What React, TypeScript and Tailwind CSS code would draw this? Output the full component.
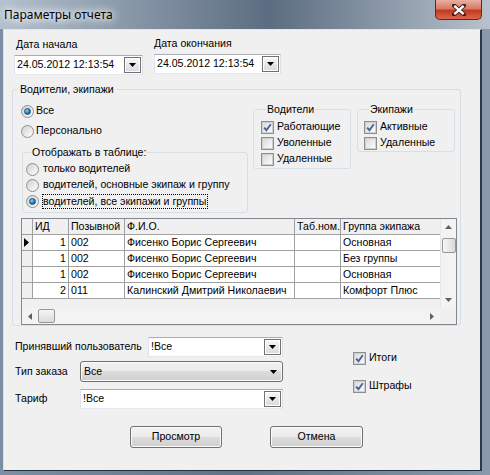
import React from "react";

const rows = [
  { id: 1, call: "002", name: "Фисенко Борис Сергеевич", tab: "", group: "Основная", current: true },
  { id: 1, call: "002", name: "Фисенко Борис Сергеевич", tab: "", group: "Без группы" },
  { id: 1, call: "002", name: "Фисенко Борис Сергеевич", tab: "", group: "Основная" },
  { id: 2, call: "011", name: "Калинский Дмитрий Николаевич", tab: "", group: "Комфорт Плюс" },
];

function Radio({ checked }: { checked?: boolean }) {
  return (
    <span className="flex h-[13px] w-[13px] shrink-0 items-center justify-center rounded-full border border-[#8e8f8f] bg-linear-to-br from-[#d2d2d2] to-[#fdfdfd]">
      {checked && (
        <span className="h-[7px] w-[7px] rounded-full border border-[#1d4f7c] bg-radial-[at_35%_30%] from-[#8ddcfb] via-[#2587c8] to-[#0f416f]" />
      )}
    </span>
  );
}

function Check({ checked }: { checked?: boolean }) {
  return (
    <span className="flex h-[13px] w-[13px] shrink-0 items-center justify-center border border-[#8e8f8f] bg-[#f4f4f4]">
      <span className="relative flex h-[11px] w-[11px] items-center justify-center border border-[#cfcfcf] bg-linear-to-br from-[#dadada] to-[#fbfbfb]">
        {checked && (
          <svg width="11" height="11" viewBox="0 0 11 11" className="absolute -top-[1px] -left-[1px]">
            <path d="M2.2 5.6 L4.4 8.2 L8.8 2.2" fill="none" stroke="#4b5f9c" strokeWidth="1.9" />
          </svg>
        )}
      </span>
    </span>
  );
}

function DropBtn() {
  return (
    <span className="flex h-[16px] w-[17px] shrink-0 items-center justify-center border border-[#707070] bg-linear-to-b from-[#f8f8f8] to-[#d9d9d9] shadow-[inset_0_0_0_1px_#ffffff]">
      <svg width="7" height="4" viewBox="0 0 7 4">
        <path d="M0 0h7L3.5 4z" fill="#000" />
      </svg>
    </span>
  );
}

function Field({ value, className }: { value: string; className: string }) {
  return (
    <div
      className={
        "flex h-[20px] items-center justify-between border border-[#abadb3] border-r-[#dbdfe6] border-b-[#e3e9ef] border-l-[#e2e3ea] bg-white pr-[1px] pl-[2px] " +
        className
      }
    >
      <span>{value}</span>
      <DropBtn />
    </div>
  );
}

function Arrow({ dir }: { dir: "up" | "down" | "left" | "right" }) {
  const d = {
    up: "M0 4 L3.5 0 L7 4z",
    down: "M0 0 L7 0 L3.5 4z",
    left: "M4 0 L4 7 L0 3.5z",
    right: "M0 0 L4 3.5 L0 7z",
  }[dir];
  const v = dir === "up" || dir === "down";
  return (
    <svg width={v ? 7 : 4} height={v ? 4 : 7} viewBox={v ? "0 0 7 4" : "0 0 4 7"}>
      <path d={d} fill="#606060" />
    </svg>
  );
}

function GridHead({ children, className = "" }: { children?: React.ReactNode; className?: string }) {
  return (
    <div className={"flex h-[16px] items-center border-r border-b border-[#a0a0a0] bg-[#f0f0f0] pl-[2px] whitespace-nowrap " + className}>
      {children}
    </div>
  );
}

function Cell({ children, className = "" }: { children?: React.ReactNode; className?: string }) {
  return (
    <div className={"flex h-[16px] items-center overflow-hidden border-r border-b border-[#a0a0a0] bg-white pl-[2px] whitespace-nowrap " + className}>
      {children}
    </div>
  );
}

function DataGrid() {
  return (
    <div className="ml-[8px] mt-[5px] w-[436px] border border-[#828790] bg-[#f0f0f0]">
      <div className="flex h-[89px]">
        <div className="w-[419px] overflow-hidden">
          <div className="grid grid-cols-[11px_36px_56px_170px_46px_100px]">
            <GridHead />
            <GridHead>ИД</GridHead>
            <GridHead>Позывной</GridHead>
            <GridHead>Ф.И.О.</GridHead>
            <GridHead>Таб.ном.</GridHead>
            <GridHead>Группа экипажа</GridHead>
            {rows.map((r, i) => (
              <React.Fragment key={i}>
                <div className="flex h-[16px] items-center border-r border-b border-[#a0a0a0] bg-[#f0f0f0] pl-[2px]">
                  {r.current && (
                    <svg width="5" height="9" viewBox="0 0 5 9">
                      <path d="M0 0 L5 4.5 L0 9z" fill="#000" />
                    </svg>
                  )}
                </div>
                <Cell className="justify-end pr-[2px]">{r.id}</Cell>
                <Cell>{r.call}</Cell>
                <Cell>{r.name}</Cell>
                <Cell>{r.tab}</Cell>
                <Cell>{r.group}</Cell>
              </React.Fragment>
            ))}
          </div>
        </div>
        <div className="flex w-[16px] flex-col items-center border-l border-[#e6e6e6] bg-[#f3f3f3]">
          <div className="flex h-[16px] items-center justify-center">
            <Arrow dir="up" />
          </div>
          <div className="mt-[3px] h-[15px] w-[14px] rounded-[2px] border border-[#979797] bg-linear-to-r from-[#f6f6f6] to-[#dadada]" />
          <div className="flex-1" />
          <div className="flex h-[16px] items-center justify-center">
            <Arrow dir="down" />
          </div>
        </div>
      </div>
      <div className="flex h-[16px]">
        <div className="flex w-[419px] items-center bg-[#f3f3f3]">
          <div className="flex w-[16px] justify-center">
            <Arrow dir="left" />
          </div>
          <div className="h-[14px] w-[17px] rounded-[2px] border border-[#979797] bg-linear-to-b from-[#f6f6f6] to-[#dadada]" />
          <div className="flex-1" />
          <div className="flex w-[16px] justify-center">
            <Arrow dir="right" />
          </div>
        </div>
        <div className="w-[16px] bg-[#f0f0f0]" />
      </div>
    </div>
  );
}

function WinButton({ children, className }: { children: React.ReactNode; className: string }) {
  return (
    <button
      className={
        "flex h-[22px] items-center justify-center rounded-[3px] border border-[#707070] bg-[linear-gradient(#f2f2f2,#ebebeb_50%,#dddddd_50%,#cfcfcf)] shadow-[inset_0_0_0_1px_#fbfbfb] " +
        className
      }
    >
      {children}
    </button>
  );
}

export default function App() {
  return (
    <div className="flex h-[475px] w-[490px] flex-col bg-linear-to-r from-[#7b8fa5] via-[#5f7186] to-[#8a99ab] font-['Liberation_Sans',Arial,sans-serif] text-[10.6px] text-black">
      <div className="flex h-[29px] items-start bg-linear-to-r from-[#b4c1ce] via-[#5c6d81] via-55% to-[#b8c2cc]">
        <div className="flex h-full flex-1 items-center pl-[4px] font-['Noto_Sans',sans-serif] text-[12px] [text-shadow:0_0_6px_#ffffff,0_0_10px_#ffffff,0_0_14px_#e8eef4]">
          Параметры отчета
        </div>
        <div className="mr-[8px] flex h-[20px] w-[47px] items-center justify-center rounded-b-[5px] border border-t-0 border-[#5a2a22] bg-[linear-gradient(#eab0a2,#d77a64_45%,#c2391f_55%,#d9674b)]">
          <svg width="14" height="12" viewBox="0 0 14 12">
            <path d="M2 1.5 L12 10.5 M12 1.5 L2 10.5" stroke="#3b1d18" strokeWidth="4" strokeLinecap="square" />
            <path d="M2.3 1.8 L11.7 10.2 M11.7 1.8 L2.3 10.2" stroke="#ffffff" strokeWidth="2.4" />
          </svg>
        </div>
      </div>

      <div className="flex flex-1">
        <div className="w-[3px]" />
        <div className="mb-[4px] flex w-[479px] flex-col border-t border-r-2 border-b border-l border-t-[#dfe6ed] border-r-[#2b3a4a] border-b-[#24303d] border-l-[#d8e0e8] bg-[#f0f0f0]">
          {/* dates */}
          <div className="flex">
            <div className="ml-[10px] mt-[8px] w-[129px]">
              <div className="pl-[2px] leading-[13px]">Дата начала</div>
              <Field value="24.05.2012 12:13:54" className="mt-[4px] w-[129px]" />
            </div>
            <div className="ml-[11px] mt-[7px] w-[127px]">
              <div className="leading-[13px]">Дата окончания</div>
              <Field value="24.05.2012 12:13:54" className="mt-[4px] w-[127px]" />
            </div>
          </div>

          {/* drivers / crews */}
          <fieldset className="ml-[8px] mt-[8px] w-[449px] rounded-[3px] border border-[#d5dfe5]">
            <legend className="ml-[5px] px-[2px] leading-[13px]">Водители, экипажи</legend>
            <div className="flex">
              <div className="ml-[8px] flex w-[232px] flex-col">
                <label className="mt-[7px] flex h-[16px] items-center gap-[2px]">
                  <Radio checked />
                  Все
                </label>
                <label className="mt-[4px] flex h-[16px] items-center gap-[2px]">
                  <Radio />
                  Персонально
                </label>
                <fieldset className="ml-[1px] mt-[7px] w-[226px] rounded-[3px] border border-[#d5dfe5] pt-[3px] pb-[3px] pl-[3px]">
                  <legend className="ml-[5px] px-[1px] leading-[12px]">Отображать в таблице:</legend>
                  <label className="flex h-[16px] items-center gap-[4px]">
                    <Radio />
                    только водителей
                  </label>
                  <label className="flex h-[16px] items-center gap-[4px]">
                    <Radio />
                    водителей, основные экипаж и группу
                  </label>
                  <label className="flex h-[16px] items-center gap-[3px]">
                    <Radio checked />
                    <span className="border border-dotted border-black pr-[1px] leading-[13px]">
                      водителей, все экипажи и группы
                    </span>
                  </label>
                </fieldset>
              </div>

              <fieldset className="mt-[7px] w-[98px] self-start rounded-[3px] border border-[#d5dfe5] pt-[4px] pb-[1px] pl-[7px]">
                <legend className="ml-[5px] px-[1px] leading-[12px]">Водители</legend>
                <label className="flex h-[16px] items-center gap-[3px]">
                  <Check checked />
                  Работающие
                </label>
                <label className="flex h-[16px] items-center gap-[3px]">
                  <Check />
                  Уволенные
                </label>
                <label className="flex h-[16px] items-center gap-[3px]">
                  <Check />
                  Удаленные
                </label>
              </fieldset>

              <fieldset className="ml-[6px] mt-[7px] w-[98px] self-start rounded-[3px] border border-[#d5dfe5] pt-[4px] pl-[6px]">
                <legend className="ml-[5px] px-[1px] leading-[12px]">Экипажи</legend>
                <label className="flex h-[16px] items-center gap-[3px]">
                  <Check checked />
                  Активные
                </label>
                <label className="flex h-[16px] items-center gap-[3px]">
                  <Check />
                  Удаленные
                </label>
              </fieldset>
            </div>
            <DataGrid />
          </fieldset>

          {/* filters */}
          <div className="flex">
            <div className="ml-[11px] flex flex-col">
              <div className="mt-[11px] flex h-[20px] items-center">
                <span className="w-[133px] whitespace-nowrap">Принявший пользователь</span>
                <Field value="!Все" className="w-[135px]" />
              </div>
              <div className="mt-[4px] flex h-[21px] items-center">
                <span className="w-[65px]">Тип заказа</span>
                <div className="flex h-[21px] w-[203px] items-center justify-between rounded-[3px] border border-[#707070] bg-[linear-gradient(#f2f2f2,#ebebeb_50%,#dddddd_50%,#cfcfcf)] pr-[5px] pl-[3px] shadow-[inset_0_0_0_1px_#fbfbfb]">
                  <span>Все</span>
                  <svg width="7" height="4" viewBox="0 0 7 4">
                    <path d="M0 0h7L3.5 4z" fill="#000" />
                  </svg>
                </div>
              </div>
              <div className="mt-[7px] flex h-[20px] items-center">
                <span className="w-[65px]">Тариф</span>
                <Field value="!Все" className="w-[203px]" />
              </div>
            </div>
            <div className="ml-[70px] flex flex-col">
              <label className="mt-[24px] flex h-[16px] items-center gap-[3px]">
                <Check checked />
                Итоги
              </label>
              <label className="mt-[12px] flex h-[16px] items-center gap-[3px]">
                <Check checked />
                Штрафы
              </label>
            </div>
          </div>

          <div className="mt-[17px] flex">
            <WinButton className="ml-[126px] w-[92px]">Просмотр</WinButton>
            <WinButton className="ml-[48px] w-[93px]">Отмена</WinButton>
          </div>
        </div>
        <div className="flex-1" />
      </div>
    </div>
  );
}
